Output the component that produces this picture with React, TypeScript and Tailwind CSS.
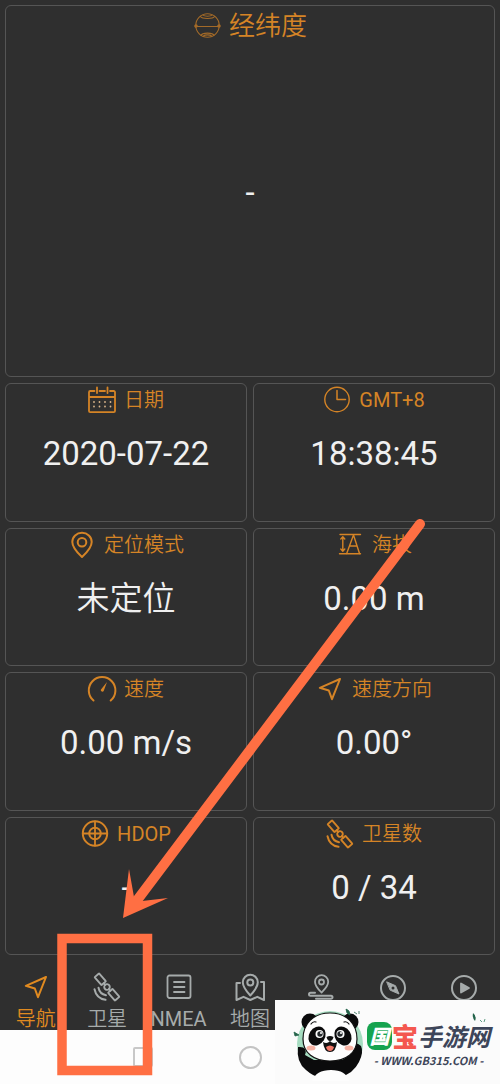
import type { ReactNode } from "react";

type IconProps = { className?: string; children?: ReactNode };

function Icon({ className = "", children }: IconProps) {
  return (
    <svg
      viewBox="0 0 28 28"
      className={`h-7 w-7 shrink-0 overflow-visible ${className}`}
      fill="none"
      stroke="currentColor"
      strokeWidth="1.8"
      strokeLinecap="round"
      strokeLinejoin="round"
      aria-hidden="true"
    >
      {children}
    </svg>
  );
}

const GlobeIcon = () => (
  <Icon className="opacity-70">
    <g strokeWidth="1.1">
      <circle cx="14.5" cy="13.5" r="11.7" />
      <path d="M3 14.5h23" />
      <path d="M7.5 4.500c1.500 2.600 12.500 2.600 14 0M10 3.200c1.500 1.300 7.500 1.300 9 0" />
      <path d="M8 23.500c1-3.200 12-3.200 13 0M10.500 24c1.500-1.500 6.500-1.500 8 0" />
    </g>
    <circle cx="3" cy="14" r="0.9" fill="currentColor" />
    <circle cx="26" cy="14" r="0.9" fill="currentColor" />
  </Icon>
);

const CalendarIcon = () => (
  <Icon>
    <path d="M6.500 5H2.200A1.200 1.200 0 0 0 1 6.200v18.800a1.200 1.200 0 0 0 1.200 1.200h23.600a1.200 1.200 0 0 0 1.200-1.200V6.200A1.200 1.200 0 0 0 25.800 5H22M11.500 5H17M1 11h26M9 1.500V7M19.500 1.500V7" />
    {[6, 11.5, 17, 22.5].map((x) => (
      <path key={x} d={`M${x} 16v.1M${x} 20.500v.1`} stroke="#d9b48a" />
    ))}
  </Icon>
);

const ClockIcon = () => (
  <Icon>
    <circle cx="14" cy="13.500" r="12.2" strokeWidth="1.4" />
    <path d="M14 4.500v9h8.500" strokeWidth="1.500" />
  </Icon>
);

const PinIcon = () => (
  <Icon>
    <path
      strokeWidth="2"
      d="M14 26C11.500 23.700 4.300 16.200 4.300 11a9.700 9.300 0 0 1 19.400 0C23.700 16.200 16.500 23.700 14 26z"
    />
    <circle cx="14" cy="11.200" r="4.300" strokeWidth="2" />
  </Icon>
);

const AltitudeIcon = () => (
  <Icon>
    <g strokeWidth="1.400">
      <path d="M4 3.500h20.500M3.500 22.700h21M6.800 6v14M4.800 8l2-2.200 2 2.200M4.800 18l2 2.200 2-2.200" />
      <path d="M10.700 22.500 17.500 4l6 18.500M13.500 15h7.600" />
    </g>
  </Icon>
);

const SpeedIcon = () => (
  <Icon>
    <path d="M5.500 25.500A13.300 13.300 0 1 1 22.700 25.500" strokeWidth="2" />
    <path d="M19 7l-3.300 9a1.600 1.600 0 0 1-2.900-1.200z" fill="currentColor" stroke="none" />
  </Icon>
);

const ArrowIcon = () => (
  <Icon>
    <path strokeWidth="2" d="M24 4 3.800 12.800l9 2.700 3.200 8.700z" />
  </Icon>
);

const TargetIcon = () => (
  <Icon>
    <circle cx="14" cy="13.500" r="12.200" strokeWidth="2" />
    <circle cx="14" cy="13.500" r="5.800" strokeWidth="2" />
    <path d="M14 1.500v24M2 13.500h24" />
  </Icon>
);

const SatelliteIcon = () => (
  <Icon>
    <g transform="translate(14 14) rotate(49)" strokeWidth="1.900">
      <rect x="-15.500" y="-3" width="10.500" height="6" rx="0.600" />
      <rect x="5" y="-3" width="10.500" height="6" rx="0.600" />
      <circle r="2.800" />
      <path d="M-5 0h2.200M2.800 0H5" />
    </g>
    <path strokeWidth="2" d="M1.500 16.200c1.200 5.800 5 9.700 11 10.600M5.500 14.800c.8 4.200 3.500 6.700 7.500 7.500" />
  </Icon>
);

const ListIcon = () => (
  <Icon>
    <rect x="2.500" y="2.500" width="23" height="22.500" rx="2" />
    <path d="M9 9h10.500M9 14h10.500M9 19h10.500" />
  </Icon>
);

const MapIcon = () => (
  <Icon>
    <g strokeWidth="2">
      <path d="M14.300 22.500C12 20 6.800 14.500 6.800 9.300a7.500 7.500 0 0 1 15 0c0 5.200-5.200 10.700-7.500 13.200z" />
      <circle cx="14.300" cy="9.500" r="3" />
      <path d="M4 10H.5v17l7-3.200 6.800 3.200 7-3.200L28 27V9h-3" />
    </g>
  </Icon>
);

const RouteIcon = () => (
  <Icon>
    <path d="M14.500 19.500C12.500 17.500 8 13.500 8 8.800a6.600 6.600 0 0 1 13.200 0c0 4.700-4.700 8.700-6.700 10.700z" />
    <circle cx="14.500" cy="9" r="2.500" />
    <path strokeWidth="2" d="M8 19.700H3.500a1.500 1.500 0 0 0 0 3H24a1.500 1.500 0 0 1 0 3H9" />
  </Icon>
);

const CompassIcon = () => (
  <Icon>
    <circle cx="14" cy="15" r="12" strokeWidth="2" />
    <path d="M8 9l8.500 3.700 3.500 8.300-8.500-3.700z" fill="currentColor" strokeWidth="1" />
    <circle cx="14" cy="15" r="1.500" fill="#2f2f2f" stroke="none" />
  </Icon>
);

const PlayIcon = () => (
  <Icon>
    <circle cx="14" cy="15" r="12" strokeWidth="2" />
    <path d="M11 10.500v9l8-4.500z" fill="currentColor" />
  </Icon>
);

const readings = [
  { title: "日期", value: "2020-07-22", icon: <CalendarIcon /> },
  { title: "GMT+8", value: "18:38:45", icon: <ClockIcon /> },
  { title: "定位模式", value: "未定位", icon: <PinIcon /> },
  { title: "海拔", value: "0.00 m", icon: <AltitudeIcon /> },
  { title: "速度", value: "0.00 m/s", icon: <SpeedIcon /> },
  { title: "速度方向", value: "0.00°", icon: <ArrowIcon /> },
  { title: "HDOP", value: "-", icon: <TargetIcon /> },
  { title: "卫星数", value: "0 / 34", icon: <SatelliteIcon /> },
];

const tabs = [
  { name: "导航", label: "导航", icon: <ArrowIcon />, active: true },
  { name: "卫星", label: "卫星", icon: <SatelliteIcon /> },
  { name: "NMEA", label: "NMEA", icon: <ListIcon /> },
  { name: "地图", label: "地图", icon: <MapIcon /> },
  { name: "轨迹", icon: <RouteIcon /> },
  { name: "指南针", icon: <CompassIcon /> },
  { name: "播放", icon: <PlayIcon /> },
];

// Chinese glyphs use the lighter cut; Latin text and digits stay regular.
const weightFor = (text: string) => (/[\u4e00-\u9fff]/.test(text) ? "font-[350]" : "font-normal");

function Panda() {
  return (
    <svg viewBox="0 0 76 76" className="h-[76px] w-[76px] shrink-0" aria-hidden="true">
      <circle cx="39" cy="38" r="33" fill="#a5dcc0" />
      <path d="M7 41q-2 15 8 23 9 8 16 7h18q13-3 19-15 5-10 2-16-5-5-10-1-5 4-1 10l-8 5H23l-9-5q3-9-7-8z" fill="#0b0b0c" />
      <path d="M21 75q4-11 19-11t18 11z" fill="#fdfdfd" />
      <circle cx="19" cy="16" r="8.500" fill="#0b0b0c" />
      <circle cx="59" cy="16" r="8.500" fill="#0b0b0c" />
      <path d="M39 7c17 0 27 11 27 26 0 14-11 22-27 22S12 47 12 33C12 18 22 7 39 7z" fill="#fefefe" stroke="#111" strokeWidth="1.200" />
      <ellipse cx="26" cy="30" rx="8" ry="10" transform="rotate(32 26 30)" fill="#0b0b0c" />
      <ellipse cx="52" cy="30" rx="8" ry="10" transform="rotate(-32 52 30)" fill="#0b0b0c" />
      <circle cx="28.500" cy="28" r="4" fill="#fff" />
      <circle cx="49.500" cy="28" r="4" fill="#fff" />
      <circle cx="29" cy="28" r="2.700" fill="#24292c" />
      <circle cx="49" cy="28" r="2.700" fill="#24292c" />
      <circle cx="30" cy="27" r="1" fill="#fff" />
      <circle cx="50" cy="27" r="1" fill="#fff" />
      <path d="M20 18q2-3 5-2M53 16q3-1 5 2" stroke="#111" strokeWidth="1.200" fill="none" strokeLinecap="round" />
      <ellipse cx="20" cy="42" rx="4.500" ry="2.500" fill="#f7b3a4" />
      <ellipse cx="58" cy="42" rx="4.500" ry="2.500" fill="#f7b3a4" />
      <path d="M35.500 31q3.500-2 7 0-1 4-3.500 4t-3.500-4z" fill="#111" />
      <path d="M32 36q4 2.500 7-1 3 3.500 7 1-1 10-7 10t-7-10z" fill="#111" />
      <path d="M35 41q4-3 8 0-1 4-4 4t-4-4z" fill="#f17868" />
      <path d="M55 3q4 1 4 6-4-1-4-6zM3 26l5 3-4 1zM63 6l3 2M68 5v3" fill="#23634a" stroke="#23634a" strokeWidth="0.800" />
    </svg>
  );
}

function SiteBadge() {
  return (
    <aside className="absolute right-0 bottom-0 flex h-[84px] w-[225px] items-center bg-[#fbfbfb] pt-1 pl-4">
      <Panda />
      <div className="relative flex flex-col items-center">
        <div className="flex items-center font-['Noto_Sans_CJK_SC',sans-serif] text-[24px] leading-8 font-black text-[#3d4559]">
          <span className="flex h-7 w-[25px] items-center justify-center rounded-lg bg-[#16a34f] text-[20px] text-white italic">
            国
          </span>
          <span className="text-[26px] text-[#f4574f]">宝</span>
          <span className="font-bold italic">手游网</span>
        </div>
        <div className="font-['Noto_Sans_CJK_SC',sans-serif] text-[11px] leading-4 font-bold whitespace-nowrap text-[#3d4559] italic">
          - WWW.GB315.COM -
        </div>
        <svg viewBox="0 0 16 12" className="absolute -top-2 right-1 h-3 w-4" aria-hidden="true">
          <path d="M3 1q4 3 2 8-3-3-2-8z" fill="#23634a" />
          <path d="M10 8l2 2M15 7l-1 3" stroke="#5f9c84" />
        </svg>
      </div>
    </aside>
  );
}

export default function App() {
  return (
    <div className="relative flex min-h-screen flex-col overflow-hidden bg-[#2f2f2f] font-[Roboto,'Noto_Sans_CJK_SC',sans-serif]">
      <main className="grid flex-1 grid-cols-2 grid-rows-[372px_repeat(4,minmax(120px,1fr))] gap-1.5 px-[5px] pt-[5px]">
        <section className="col-span-2 flex flex-col rounded-md border border-[#555555]">
          <h2 className="flex h-10 items-center justify-center gap-2 text-[26px] font-[350] text-[#d58426]">
            <GlobeIcon />
            经纬度
          </h2>
          <p className="flex flex-1 items-center justify-center pb-9 text-[33px] text-[#f0f0f0]">-</p>
        </section>
        {readings.map((r) => (
          <section key={r.title} className="rounded-md border border-[#555555] text-center">
            <h2
              className={`flex h-8 items-center justify-center gap-2 text-[20px] text-[#d58426] ${weightFor(r.title)}`}
            >
              {r.icon}
              {r.title}
            </h2>
            <p className={`mt-4 text-[33px] leading-[44px] text-[#f0f0f0] ${weightFor(r.value)}`}>{r.value}</p>
          </section>
        ))}
      </main>

      <nav className="grid h-[75px] grid-cols-7 pt-[18px]">
        {tabs.map((t) => (
          <button
            key={t.name}
            type="button"
            aria-label={t.name}
            className={`flex min-w-0 flex-col items-center gap-1.5 text-[20px] leading-6 whitespace-nowrap ${weightFor(t.name)} ${
              t.active ? "text-[#e08a20]" : "text-[#a6abab]"
            }`}
          >
            {t.icon}
            {t.label && <span>{t.label}</span>}
          </button>
        ))}
      </nav>

      <footer className="grid h-[54px] grid-cols-[143px_1fr_143px] items-center bg-[#fdfdfd]">
        <button type="button" aria-label="最近任务" className="-mr-2.5 h-5 w-5 justify-self-end rounded-xs border-2 border-[#c8c8c8]" />
        <button type="button" aria-label="主屏幕" className="h-[23px] w-[23px] justify-self-center rounded-full border-2 border-[#c4c4c4]" />
      </footer>

      <SiteBadge />

      <svg viewBox="0 0 500 1084" className="pointer-events-none absolute bottom-0 left-0 w-full" aria-hidden="true">
        <path d="M420 524 138 899" stroke="#ff6f43" strokeWidth="10" strokeLinecap="round" />
        <path d="M123 918l6-49 5 28 8 4 26-3z" fill="#ff6f43" />
        <rect x="62" y="938.500" width="85.500" height="132" fill="none" stroke="#ff6f43" strokeWidth="9.500" />
      </svg>
    </div>
  );
}
